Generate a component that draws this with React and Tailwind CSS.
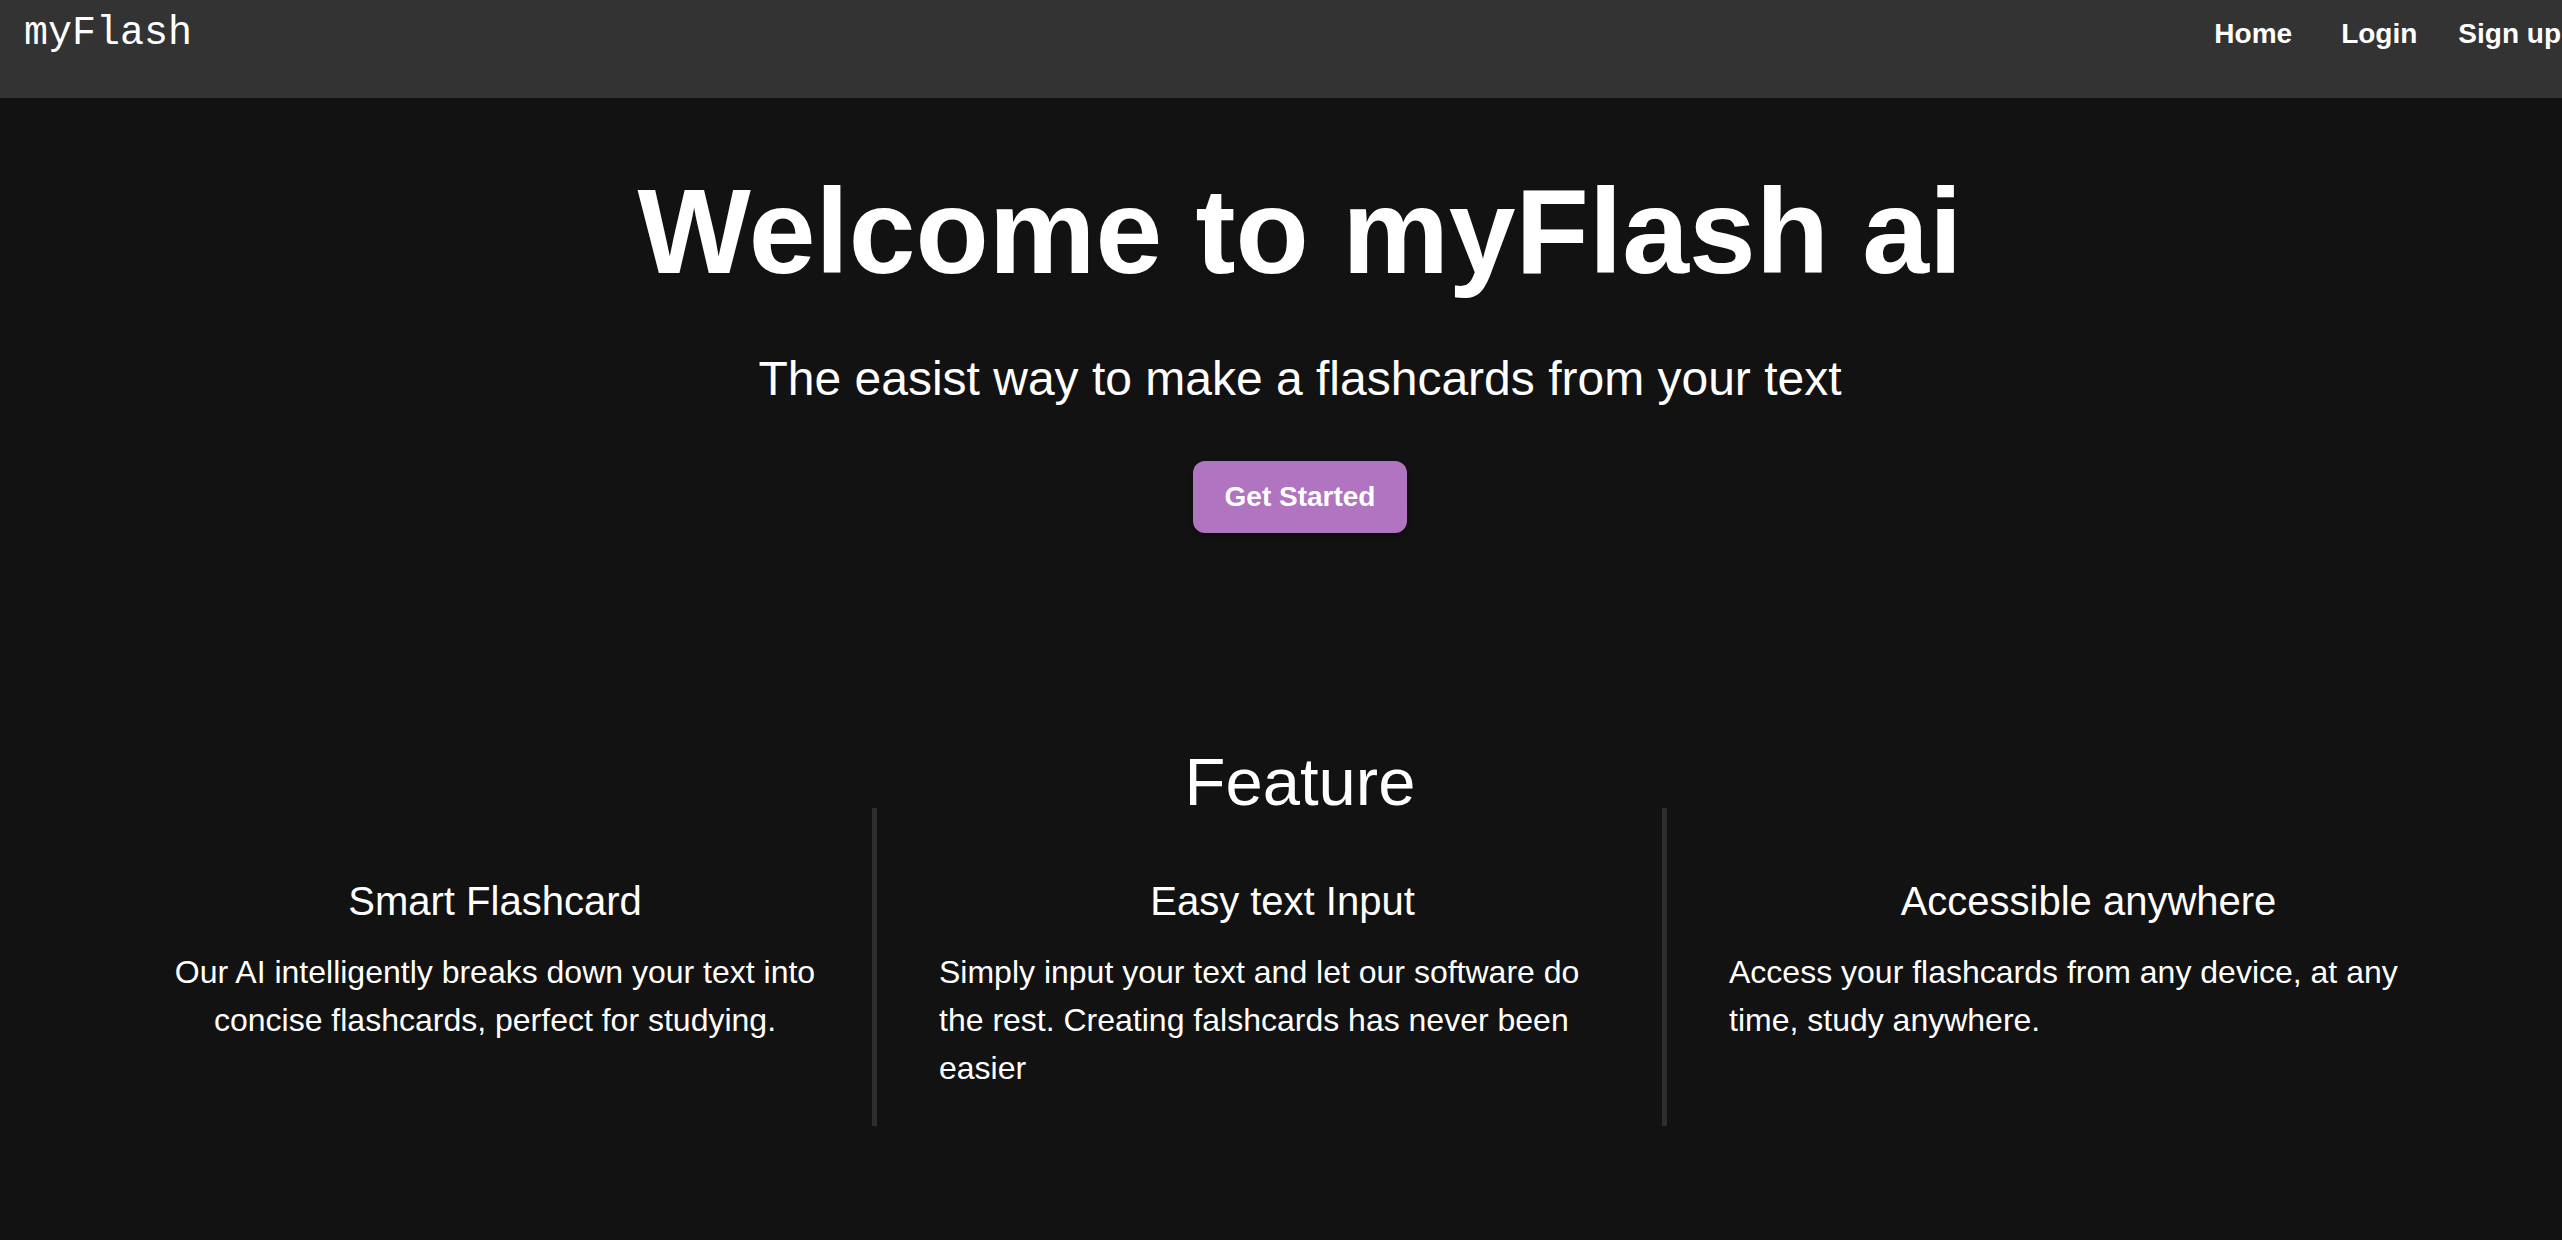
import React from 'react';

const features = [
    {
        title: 'Smart Flashcard',
        text: 'Our AI intelligently breaks down your text into concise flashcards, perfect for studying.',
        box: 'pl-[80px] pr-[44px] text-center',
    },
    {
        title: 'Easy text Input',
        text: 'Simply input your text and let our software do the rest. Creating falshcards has never been easier',
        box: 'pl-[62px] pr-[36px] border-l-[5px] border-[#2e2e2e]',
    },
    {
        title: 'Accessible anywhere',
        text: 'Access your flashcards from any device, at any time, study anywhere.',
        box: 'pl-[62px] pr-[4px] border-l-[5px] border-[#2e2e2e]',
    },
];

export default function App() {
    return (
        <div className="min-h-screen w-full overflow-hidden bg-[#121212] text-white font-['Liberation_Sans',Arial,sans-serif]">
            <div className="w-[2600px]">

                {/* Navbar */}
                <nav className="flex items-start justify-between h-[98px] bg-[#333333] pl-6 pr-[39px]">
                    <a href="#" className="pt-[14px] text-[40px] leading-[40px] font-['Liberation_Mono',monospace]">myFlash</a>
                    <div className="flex pt-[18px] text-[28px] leading-[32px] font-bold">
                        <a href="#" className="mr-[49px]">Home</a>
                        <a href="#" className="mr-[41px]">Login</a>
                        <a href="#">Sign up</a>
                    </div>
                </nav>

                {/* Hero */}
                <section className="flex flex-col items-center text-center">
                    <h1 className="mt-[61px] text-[120px] leading-[144px] font-bold">Welcome to myFlash ai</h1>
                    <p className="mt-[47px] text-[48px] leading-[58px]">The easist way to make a flashcards from your text</p>
                    <button className="mt-[53px] h-[72px] px-8 rounded-[12px] bg-[#b074c1] text-[28px] font-bold shadow-[0_2px_4px_rgba(0,0,0,0.4)]">
                        Get Started
                    </button>
                </section>

                {/* Feature */}
                <section className="mt-[223px]">
                    <h2 className="text-center text-[67px] leading-[52px]">Feature</h2>
                    <div className="grid grid-cols-[790px_790px_790px] ml-[82px]">
                        {features.map((f) => (
                            <div key={f.title} className={`pt-[69px] pb-[34px] ${f.box}`}>
                                <h3 className="text-center text-[40px] leading-[48px]">{f.title}</h3>
                                <p className="mt-[23px] text-[32px] leading-[48px]">{f.text}</p>
                            </div>
                        ))}
                    </div>
                </section>
            </div>
        </div>
    );
}
